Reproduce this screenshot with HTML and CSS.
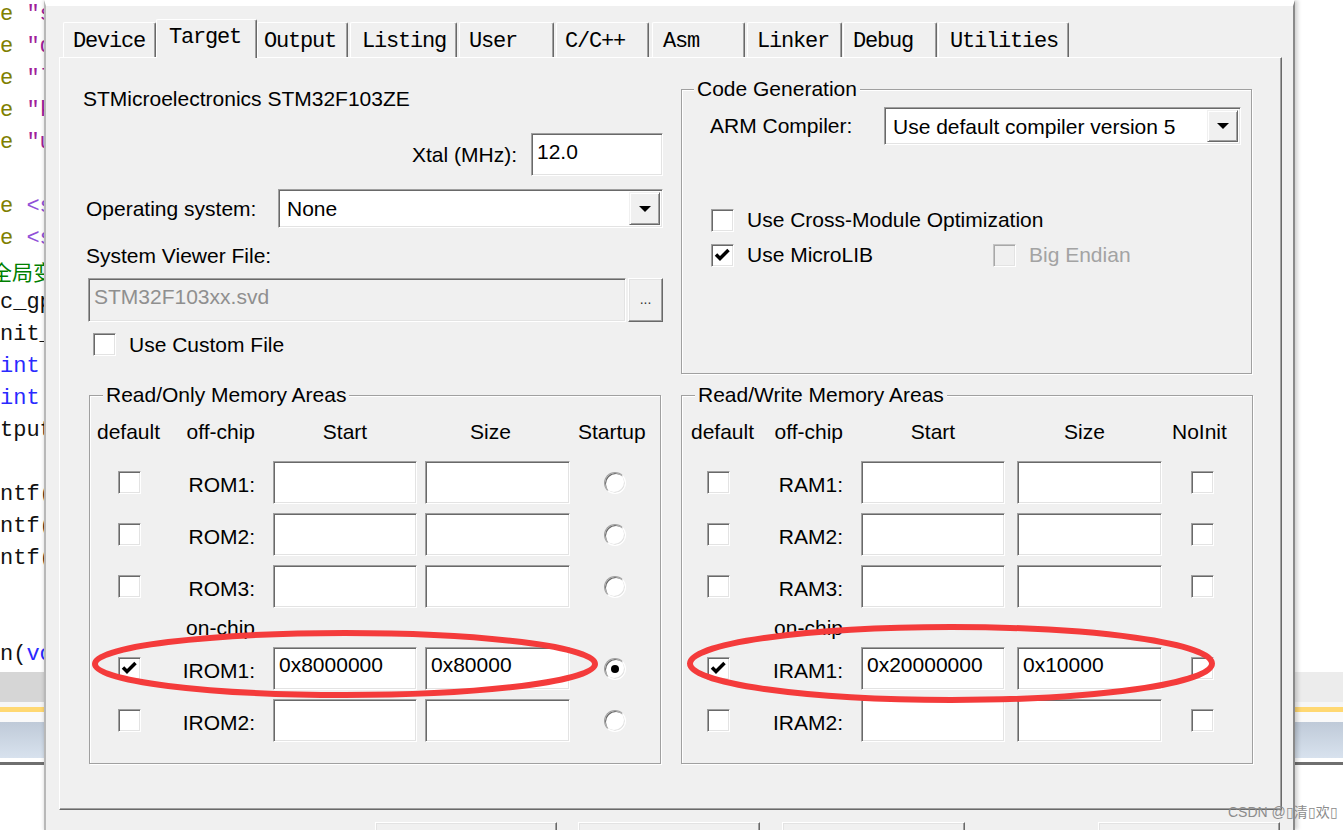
FILE: index.html
```html
<!DOCTYPE html>
<html>
<head>
<meta charset="utf-8">
<title>Options for Target</title>
<link rel="stylesheet" href="styles.css">
</head>
<body>
<div class="screen">
  <div class="editor">
    <div class="code">
      <div class="ln"><span class="pp">e</span> <span class="str">"sys.h"</span></div>
      <div class="ln"><span class="pp">e</span> <span class="str">"delay.h"</span></div>
      <div class="ln"><span class="pp">e</span> <span class="str">"led.h"</span></div>
      <div class="ln"><span class="pp">e</span> <span class="str">"key.h"</span></div>
      <div class="ln"><span class="pp">e</span> <span class="str">"usart.h"</span></div>
      <div class="ln"></div>
      <div class="ln"><span class="pp">e</span> <span class="ang">&lt;stdio.h&gt;</span></div>
      <div class="ln"><span class="pp">e</span> <span class="ang">&lt;string.h&gt;</span></div>
      <div class="ln"><span class="cmt cjk">全局变量</span></div>
      <div class="ln">c_gpio</div>
      <div class="ln">nit_t</div>
      <div class="ln"><span class="kw">int</span></div>
      <div class="ln"><span class="kw">int</span></div>
      <div class="ln">tput</div>
      <div class="ln"></div>
      <div class="ln">ntf(</div>
      <div class="ln">ntf(</div>
      <div class="ln">ntf(</div>
      <div class="ln"></div>
      <div class="ln"></div>
      <div class="ln">n(<span class="kw">void</span>)</div>
    </div>
    <div class="bands dark">
      <div class="b-top"></div>
      <div class="b-gray"></div>
      <div class="b-gap"></div>
      <div class="b-yellow"></div>
      <div class="b-white"></div>
      <div class="b-blue"></div>
      <div class="b-white2"></div>
      <div class="b-line"></div>
    </div>
  </div>

  <div class="dialog">
    <div class="tabs">
      <div class="tab t1">Device</div>
      <div class="tab t2 sel">Target</div>
      <div class="tab t3">Output</div>
      <div class="tab t4">Listing</div>
      <div class="tab t5">User</div>
      <div class="tab t6">C/C++</div>
      <div class="tab t7">Asm</div>
      <div class="tab t8">Linker</div>
      <div class="tab t9">Debug</div>
      <div class="tab t10">Utilities</div>
    </div>

    <div class="panel">
      <div class="top-row">
        <div class="left-col">
          <div class="devname">STMicroelectronics STM32F103ZE</div>
          <div class="xtal-row">
            <span class="lbl">Xtal (MHz):</span>
            <div class="field xtal">12.0</div>
          </div>
          <div class="os-row">
            <span class="lbl">Operating system:</span>
            <div class="combo os"><span class="combo-text">None</span><span class="drop"><span class="arrow"></span></span></div>
          </div>
          <div class="svf-label">System Viewer File:</div>
          <div class="svd-row">
            <div class="field disabled svd">STM32F103xx.svd</div>
            <div class="btn dots">...</div>
          </div>
          <div class="custom-row">
            <span class="cb"></span>
            <span>Use Custom File</span>
          </div>
        </div>

        <fieldset class="group codegen">
          <legend>Code Generation</legend>
          <div class="cg-inner">
            <div class="arm-row">
              <span>ARM Compiler:</span>
              <div class="combo arm"><span class="combo-text">Use default compiler version 5</span><span class="drop"><span class="arrow"></span></span></div>
            </div>
            <div class="cb-row first">
              <div class="cb-item"><span class="cb"></span><span>Use Cross-Module Optimization</span></div>
            </div>
            <div class="cb-row second">
              <div class="cb-item micro"><span class="cb"><svg class="check" width="19" height="19" viewBox="0 0 19 19"><path d="M3 8.5 L7 12.5 L15.5 4" fill="none" stroke="#000" stroke-width="3.5"/></svg></span><span>Use MicroLIB</span></div>
              <div class="cb-item off"><span class="cb dis"></span><span>Big Endian</span></div>
            </div>
          </div>
        </fieldset>
      </div>

      <div class="bottom-row">
        <fieldset class="group mem rom">
          <legend>Read/Only Memory Areas</legend>
          <div class="mem-grid">
            <div class="hd default">default</div>
            <div class="hd off">off-chip</div>
            <div class="hd start">Start</div>
            <div class="hd size">Size</div>
            <div class="hd last">Startup</div>

            <div class="c1"><span class="cb"></span></div>
            <div class="c2">ROM1:</div>
            <div class="c3"><div class="field memf"></div></div>
            <div class="c4"><div class="field memf"></div></div>
            <div class="c5"><span class="radio"></span></div>

            <div class="c1"><span class="cb"></span></div>
            <div class="c2">ROM2:</div>
            <div class="c3"><div class="field memf"></div></div>
            <div class="c4"><div class="field memf"></div></div>
            <div class="c5"><span class="radio"></span></div>

            <div class="c1"><span class="cb"></span></div>
            <div class="c2">ROM3:</div>
            <div class="c3"><div class="field memf"></div></div>
            <div class="c4"><div class="field memf"></div></div>
            <div class="c5"><span class="radio"></span></div>

            <div class="c2 onchip">on-chip</div>

            <div class="c1"><span class="cb"><svg class="check" width="19" height="19" viewBox="0 0 19 19"><path d="M3 8.5 L7 12.5 L15.5 4" fill="none" stroke="#000" stroke-width="3.5"/></svg></span></div>
            <div class="c2">IROM1:</div>
            <div class="c3"><div class="field memf">0x8000000</div></div>
            <div class="c4"><div class="field memf">0x80000</div></div>
            <div class="c5"><span class="radio on"></span></div>

            <div class="c1"><span class="cb"></span></div>
            <div class="c2">IROM2:</div>
            <div class="c3"><div class="field memf"></div></div>
            <div class="c4"><div class="field memf"></div></div>
            <div class="c5"><span class="radio"></span></div>
          </div>
        </fieldset>

        <fieldset class="group mem ram">
          <legend>Read/Write Memory Areas</legend>
          <div class="mem-grid">
            <div class="hd default">default</div>
            <div class="hd off">off-chip</div>
            <div class="hd start">Start</div>
            <div class="hd size">Size</div>
            <div class="hd last">NoInit</div>

            <div class="c1"><span class="cb"></span></div>
            <div class="c2">RAM1:</div>
            <div class="c3"><div class="field memf"></div></div>
            <div class="c4"><div class="field memf"></div></div>
            <div class="c5"><span class="cb"></span></div>

            <div class="c1"><span class="cb"></span></div>
            <div class="c2">RAM2:</div>
            <div class="c3"><div class="field memf"></div></div>
            <div class="c4"><div class="field memf"></div></div>
            <div class="c5"><span class="cb"></span></div>

            <div class="c1"><span class="cb"></span></div>
            <div class="c2">RAM3:</div>
            <div class="c3"><div class="field memf"></div></div>
            <div class="c4"><div class="field memf"></div></div>
            <div class="c5"><span class="cb"></span></div>

            <div class="c2 onchip">on-chip</div>

            <div class="c1"><span class="cb"><svg class="check" width="19" height="19" viewBox="0 0 19 19"><path d="M3 8.5 L7 12.5 L15.5 4" fill="none" stroke="#000" stroke-width="3.5"/></svg></span></div>
            <div class="c2">IRAM1:</div>
            <div class="c3"><div class="field memf">0x20000000</div></div>
            <div class="c4"><div class="field memf">0x10000</div></div>
            <div class="c5"><span class="cb"></span></div>

            <div class="c1"><span class="cb"></span></div>
            <div class="c2">IRAM2:</div>
            <div class="c3"><div class="field memf"></div></div>
            <div class="c4"><div class="field memf"></div></div>
            <div class="c5"><span class="cb"></span></div>
          </div>
        </fieldset>
      </div>
    </div>

    <div class="buttons">
      <div class="dbtn b-ok">OK</div>
      <div class="dbtn b-cancel">Cancel</div>
      <div class="dbtn b-def">Defaults</div>
      <div class="dbtn b-help">Help</div>
    </div>
  </div>

  <div class="desk-right">
    <div class="bands light">
      <div class="b-top"></div>
      <div class="b-gray"></div>
      <div class="b-gap"></div>
      <div class="b-yellow"></div>
      <div class="b-white"></div>
      <div class="b-blue"></div>
      <div class="b-white2"></div>
      <div class="b-line"></div>
    </div>
  </div>
</div>

<svg class="annot" width="1343" height="830" viewBox="0 0 1343 830">
  <ellipse cx="345" cy="664" rx="250" ry="31" fill="none" stroke="#f43b3b" stroke-width="6"/>
  <ellipse cx="951" cy="663.5" rx="261" ry="36.5" fill="none" stroke="#f43b3b" stroke-width="6"/>
</svg>
<div class="watermark">CSDN @▯清▯欢▯</div>
</body>
</html>
```

FILE: styles.css
```css
html, body {
  margin: 0;
  padding: 0;
}

body {
  width: 1343px;
  height: 830px;
  overflow: hidden;
  background: #fff;
  font-family: "Liberation Sans", Arial, sans-serif;
  font-size: 21px;
  color: #000;
}

.screen {
  display: flex;
  height: 830px;
}

/* ---------- background editor strip ---------- */
.editor {
  width: 44px;
  flex: none;
  overflow: hidden;
  background: #fff;
}

.code {
  margin-top: -1px;
}

.ln {
  height: 32px;
  line-height: 32px;
  white-space: pre;
  font-family: "Liberation Mono", "Noto Sans CJK SC", monospace;
  font-size: 22px;
  color: #111;
}

.pp { color: #808000; }
.str { color: #a0209a; }
.ang { color: #9150d8; }
.cmt { color: #008000; }
.kw { color: #2a2aff; }

.cjk {
  display: inline-block;
  margin-left: -9px;
  font-family: "Noto Sans CJK SC", sans-serif;
  font-size: 21px;
}

.bands .b-top { height: 1px; background: #fff; }
.bands .b-gray { height: 30px; background: #d6d6d6; }
.bands.light .b-gray { background: #ececec; }
.bands .b-gap { height: 5px; background: #f6f6f6; }
.bands .b-yellow { height: 5px; background: #ffd872; }
.bands .b-white { height: 10px; background: #fafafa; }
.bands .b-blue { height: 36px; background: linear-gradient(#bfcad8, #d8e2ee); }
.bands .b-white2 { height: 4px; background: #fff; }
.bands .b-line { height: 3px; background: #6f6f6f; }

.desk-right {
  flex: 1;
  background: #fff;
  padding-top: 671px;
}

/* ---------- dialog ---------- */
.dialog {
  width: 1251px;
  flex: none;
  box-sizing: border-box;
  border-left: 2px solid #b8b8b8;
  border-right: 2px solid #8a8a8a;
  border-top: 6px solid #fff;
  background: #f0f0f0;
  box-shadow: 3px 0 4px rgba(0, 0, 0, 0.16), -1px 0 3px rgba(0, 0, 0, 0.1);
  position: relative;
  z-index: 1;
}

.tabs {
  display: flex;
  align-items: flex-end;
  height: 51px;
  padding-left: 17px;
}

.tab {
  box-sizing: border-box;
  height: 35px;
  flex: none;
  border-top: 1px solid #fff;
  border-left: 1px solid #fff;
  border-right: 1px solid #696969;
  box-shadow: inset -1px 0 0 #a0a0a0;
  border-radius: 2px 2px 0 0;
  background: #f0f0f0;
  font-family: "Liberation Mono", monospace;
  font-size: 22px;
  line-height: 30px;
  letter-spacing: -1.2px;
  padding: 4px 0 0 9px;
  white-space: nowrap;
  overflow: hidden;
}

.tab.sel {
  height: 39px;
  margin-bottom: -1px;
  padding-top: 3px;
  position: relative;
  z-index: 2;
}

.t1 { width: 93px; }
.t2 { width: 101px; padding-left: 12px; }
.t3 { width: 91px; padding-left: 6px; }
.t4 { width: 107px; margin-left: 2px; padding-left: 11px; }
.t5 { width: 95px; margin-left: 2px; }
.t6 { width: 93px; margin-left: 2px; padding-left: 8px; }
.t7 { width: 93px; margin-left: 3px; padding-left: 10px; }
.t8 { width: 95px; margin-left: 2px; }
.t9 { width: 94px; margin-left: 1px; }
.t10 { width: 131px; margin-left: 1px; padding-left: 11px; }

.panel {
  box-sizing: border-box;
  margin-left: 13px;
  width: 1223px;
  height: 753px;
  border-top: 1px solid #fff;
  border-left: 1px solid #fff;
  border-right: 1px solid #696969;
  border-bottom: 1px solid #696969;
  box-shadow: inset -1px -1px 0 #a0a0a0;
}

/* ---------- top area ---------- */
.top-row {
  display: flex;
  align-items: flex-start;
}

.left-col {
  margin-left: 23px;
  width: 580px;
  padding-top: 29px;
}

.devname {
  line-height: 24px;
  white-space: nowrap;
}

.lbl {
  line-height: 24px;
  white-space: nowrap;
}

.xtal-row {
  display: flex;
  justify-content: flex-end;
  align-items: center;
  gap: 14px;
  margin-top: 22px;
}

.os-row {
  display: flex;
  justify-content: space-between;
  align-items: center;
  margin-top: 13px;
}

.os-row .lbl {
  padding-left: 3px;
}

.svf-label {
  margin-top: 16px;
  padding-left: 3px;
  line-height: 24px;
}

.svd-row {
  display: flex;
  gap: 2px;
  margin-top: 10px;
  margin-left: 5px;
}

.custom-row {
  display: flex;
  align-items: center;
  gap: 13px;
  height: 23px;
  margin-top: 11px;
  margin-left: 10px;
  line-height: 24px;
}

/* sunken edit field */
.field {
  box-sizing: border-box;
  border: 1px solid;
  border-color: #a0a0a0 #fff #fff #a0a0a0;
  box-shadow: inset 1px 1px 0 #696969, inset -1px -1px 0 #e3e3e3;
  background: #fff;
  line-height: 24px;
  white-space: nowrap;
  overflow: hidden;
}

.field.xtal {
  width: 132px;
  height: 43px;
  padding: 6px 0 0 5px;
}

.field.svd {
  width: 538px;
  height: 44px;
  padding: 6px 0 0 5px;
}

.field.disabled {
  background: #f0f0f0;
  color: #8f8f8f;
}

.field.memf {
  width: 144px;
  height: 43px;
  padding: 5px 0 0 5px;
}

/* raised button */
.btn {
  box-sizing: border-box;
  border: 1px solid;
  border-color: #fff #696969 #696969 #fff;
  box-shadow: inset -1px -1px 0 #a0a0a0, inset 1px 1px 0 #e3e3e3;
  background: #f0f0f0;
}

.btn.dots {
  width: 35px;
  height: 44px;
  font-size: 14px;
  line-height: 40px;
  text-align: center;
  color: #333;
}

/* combo box */
.combo {
  box-sizing: border-box;
  display: flex;
  align-items: stretch;
  border: 1px solid;
  border-color: #a0a0a0 #fff #fff #a0a0a0;
  box-shadow: inset 1px 1px 0 #696969, inset -1px -1px 0 #e3e3e3;
  background: #fff;
  padding: 2px 2px 2px 8px;
}

.combo.os {
  width: 385px;
  height: 39px;
}

.combo.arm {
  width: 357px;
  height: 38px;
}

.combo-text {
  flex: 1;
  line-height: 33px;
  white-space: nowrap;
  overflow: hidden;
}

.drop {
  box-sizing: border-box;
  width: 31px;
  flex: none;
  display: flex;
  align-items: center;
  justify-content: center;
  border: 1px solid;
  border-color: #f0f0f0 #696969 #696969 #f0f0f0;
  box-shadow: inset 1px 1px 0 #fff, inset -1px -1px 0 #a0a0a0;
  background: #f0f0f0;
}

.arrow {
  width: 0;
  height: 0;
  border-left: 6px solid transparent;
  border-right: 6px solid transparent;
  border-top: 6px solid #000;
}

/* check box & radio */
.cb {
  box-sizing: border-box;
  width: 23px;
  height: 23px;
  flex: none;
  display: flex;
  align-items: center;
  justify-content: center;
  border: 1px solid;
  border-color: #a0a0a0 #fff #fff #a0a0a0;
  box-shadow: inset 1px 1px 0 #696969, inset -1px -1px 0 #e3e3e3;
  background: #fff;
}

.cb.dis {
  background: #f0f0f0;
  border-color: #c4c4c4 #fff #fff #c4c4c4;
  box-shadow: inset 1px 1px 0 #a8a8a8, inset -1px -1px 0 #e3e3e3;
}

.check {
  display: block;
}

.radio {
  box-sizing: border-box;
  width: 22px;
  height: 22px;
  flex: none;
  display: flex;
  align-items: center;
  justify-content: center;
  border-radius: 50%;
  border: 1px solid;
  border-color: #a0a0a0 #fff #fff #a0a0a0;
  box-shadow: inset 1px 1px 0 #696969, inset -1px -1px 0 #e3e3e3;
  background: #fff;
}

.radio.on::after {
  content: "";
  width: 8px;
  height: 8px;
  border-radius: 50%;
  background: #000;
}

/* group boxes */
.group {
  box-sizing: border-box;
  margin: 0;
  padding: 0;
  min-width: 0;
  border: 1px solid #a0a0a0;
  box-shadow: 1px 1px 0 #fff, inset 1px 1px 0 #fff;
}

.group legend {
  padding: 0 3px;
  margin-left: 13px;
  line-height: 24px;
  background: #f0f0f0;
  white-space: nowrap;
}

.codegen {
  width: 571px;
  margin-left: 18px;
  margin-top: 19px;
}

.codegen legend {
  margin-left: 12px;
}

.cg-inner {
  padding: 6px 10px 106px 28px;
}

.arm-row {
  display: flex;
  align-items: center;
  justify-content: space-between;
  line-height: 24px;
}

.cb-row {
  display: flex;
  align-items: center;
  height: 24px;
  line-height: 24px;
  padding-left: 1px;
}

.cb-row.first { margin-top: 63px; }
.cb-row.second { margin-top: 11px; }

.cb-item {
  display: flex;
  align-items: center;
  gap: 13px;
  white-space: nowrap;
}

.cb-item.micro { width: 282px; }
.cb-item.off { color: #a3a3a3; }

/* memory areas */
.bottom-row {
  display: flex;
  gap: 20px;
  margin-top: 9px;
  margin-left: 29px;
}

.mem {
  width: 572px;
}

.mem-grid {
  display: grid;
  grid-template-rows: 32px 43px 43px 43px 21px 43px 43px;
  row-gap: 9px;
  padding: 13px 0 21px 0;
}

.rom .mem-grid { grid-template-columns: 76px 89px 166px 154px 84px; }
.ram .mem-grid { grid-template-columns: 72px 89px 166px 157px 85px; }

.hd {
  line-height: 24px;
  white-space: nowrap;
}

.hd.off { text-align: right; }
.hd.start { padding-left: 18px; padding-right: 4px; text-align: center; }
.rom .hd.default { padding-left: 7px; }
.ram .hd.default { padding-left: 9px; }
.rom .hd.size { padding-left: 49px; }
.ram .hd.size { padding-left: 55px; }
.rom .hd.last { padding-left: 3px; }
.ram .hd.last { padding-left: 6px; }

.c1 {
  grid-column: 1;
  display: flex;
  align-items: center;
}

.rom .c1 { padding-left: 28px; }
.ram .c1 { padding-left: 25px; }

.c2 {
  text-align: right;
  padding-top: 12px;
  line-height: 24px;
  white-space: nowrap;
}

.c2.onchip {
  grid-column: 2;
  padding-top: 0;
  line-height: 21px;
}

.c3 { padding-left: 18px; }
.c4 .field.memf { width: 145px; }
.rom .c4 { padding-left: 4px; }
.ram .c4 { padding-left: 8px; }

.c5 {
  display: flex;
  align-items: center;
}

.rom .c5 { padding-left: 29px; }
.ram .c5 { padding-left: 25px; }

/* dialog buttons */
.buttons {
  display: flex;
  margin-top: 12px;
  padding-left: 329px;
}

.dbtn {
  box-sizing: border-box;
  width: 182px;
  height: 44px;
  border: 1px solid;
  border-color: #fff #696969 #696969 #fff;
  box-shadow: inset -1px -1px 0 #a0a0a0, inset 1px 1px 0 #e3e3e3;
  background: #f0f0f0;
  text-align: center;
  line-height: 44px;
}

.b-cancel { margin-left: 21px; }
.b-def { margin-left: 22px; width: 183px; }
.b-help { margin-left: 133px; }

/* annotation overlay */
.annot {
  position: absolute;
  left: 0;
  top: 0;
  z-index: 10;
  pointer-events: none;
}

.watermark {
  position: absolute;
  left: 1228px;
  top: 803px;
  z-index: 11;
  font-family: "Liberation Sans", "Noto Sans CJK SC", sans-serif;
  font-size: 14px;
  line-height: 18px;
  color: #8c8c8c;
  white-space: nowrap;
}
```
